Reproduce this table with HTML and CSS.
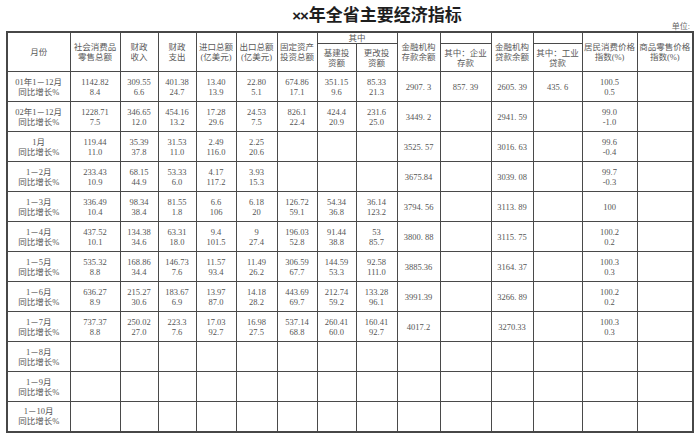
FILE: index.html
```html
<!DOCTYPE html>
<html lang="zh">
<head>
<meta charset="utf-8">
<title>××年全省主要经济指标</title>
<link rel="stylesheet" href="styles.css">
</head>
<body>
<div class="page">
  <h1 class="title"><span class="xx">××</span>年全省主要经济指标</h1>
  <div class="unit">单位:</div>
  <table class="grid">
    <colgroup>
      <col class="c63"><col class="c50"><col class="c38"><col class="c38"><col class="c40"><col class="c41"><col class="c40"><col class="c39"><col class="c41"><col class="c43"><col class="c51"><col class="c42"><col class="c49"><col class="c55"><col class="c56">
    </colgroup>
    <thead>
      <tr class="h1">
        <th rowspan="2">月份</th>
        <th rowspan="2">社会消费品<br>零售总额</th>
        <th rowspan="2">财政<br>收入</th>
        <th rowspan="2">财政<br>支出</th>
        <th rowspan="2">进口总额<br>(亿美元)</th>
        <th rowspan="2">出口总额<br>(亿美元)</th>
        <th rowspan="2">固定资产<br>投资总额</th>
        <th colspan="2">其中</th>
        <th rowspan="2">金融机构<br>存款余额</th>
        <th></th>
        <th rowspan="2">金融机构<br>贷款余额</th>
        <th></th>
        <th rowspan="2">居民消费价格<br>指数(%)</th>
        <th rowspan="2">商品零售价格<br>指数(%)</th>
      </tr>
      <tr class="h2">
        <th>基建投<br>资额</th>
        <th>更改投<br>资额</th>
        <th>其中：企业<br>存款</th>
        <th>其中：工业<br>贷款</th>
      </tr>
    </thead>
    <tbody>
      <tr><td>01年1－12月<br>同比增长%</td><td>1142.82<br>8.4</td><td>309.55<br>6.6</td><td>401.38<br>24.7</td><td>13.40<br>13.9</td><td>22.80<br>5.1</td><td>674.86<br>17.1</td><td>351.15<br>9.6</td><td>85.33<br>21.3</td><td>2907. 3</td><td>857. 39</td><td>2605. 39</td><td>435. 6</td><td>100.5<br>0.5</td><td></td></tr>
      <tr><td>02年1－12月<br>同比增长%</td><td>1228.71<br>7.5</td><td>346.65<br>12.0</td><td>454.16<br>13.2</td><td>17.28<br>29.6</td><td>24.53<br>7.5</td><td>826.1<br>22.4</td><td>424.4<br>20.9</td><td>231.6<br>25.0</td><td>3449. 2</td><td></td><td>2941. 59</td><td></td><td>99.0<br>-1.0</td><td></td></tr>
      <tr><td>1月<br>同比增长%</td><td>119.44<br>11.0</td><td>35.39<br>37.8</td><td>31.53<br>11.0</td><td>2.49<br>116.0</td><td>2.25<br>20.6</td><td></td><td></td><td></td><td>3525. 57</td><td></td><td>3016. 63</td><td></td><td>99.6<br>-0.4</td><td></td></tr>
      <tr><td>1－2月<br>同比增长%</td><td>233.43<br>10.9</td><td>68.15<br>44.9</td><td>53.33<br>6.0</td><td>4.17<br>117.2</td><td>3.93<br>15.3</td><td></td><td></td><td></td><td>3675.84</td><td></td><td>3039. 08</td><td></td><td>99.7<br>-0.3</td><td></td></tr>
      <tr><td>1－3月<br>同比增长%</td><td>336.49<br>10.4</td><td>98.34<br>38.4</td><td>81.55<br>1.8</td><td>6.6<br>106</td><td>6.18<br>20</td><td>126.72<br>59.1</td><td>54.34<br>36.8</td><td>36.14<br>123.2</td><td>3794. 56</td><td></td><td>3113. 89</td><td></td><td>100</td><td></td></tr>
      <tr><td>1－4月<br>同比增长%</td><td>437.52<br>10.1</td><td>134.38<br>34.6</td><td>63.31<br>18.0</td><td>9.4<br>101.5</td><td>9<br>27.4</td><td>196.03<br>52.8</td><td>91.44<br>38.8</td><td>53<br>85.7</td><td>3800. 88</td><td></td><td>3115. 75</td><td></td><td>100.2<br>0.2</td><td></td></tr>
      <tr><td>1－5月<br>同比增长%</td><td>535.32<br>8.8</td><td>168.86<br>34.4</td><td>146.73<br>7.6</td><td>11.57<br>93.4</td><td>11.49<br>26.2</td><td>306.59<br>67.7</td><td>144.59<br>53.3</td><td>92.58<br>111.0</td><td>3885.36</td><td></td><td>3164. 37</td><td></td><td>100.3<br>0.3</td><td></td></tr>
      <tr><td>1－6月<br>同比增长%</td><td>636.27<br>8.9</td><td>215.27<br>30.6</td><td>183.67<br>6.9</td><td>13.97<br>87.0</td><td>14.18<br>28.2</td><td>443.69<br>69.7</td><td>212.74<br>59.2</td><td>133.28<br>96.1</td><td>3991.39</td><td></td><td>3266. 89</td><td></td><td>100.2<br>0.2</td><td></td></tr>
      <tr><td>1－7月<br>同比增长%</td><td>737.37<br>8.8</td><td>250.02<br>27.0</td><td>223.3<br>7.6</td><td>17.03<br>92.7</td><td>16.98<br>27.5</td><td>537.14<br>68.8</td><td>260.41<br>60.0</td><td>160.41<br>92.7</td><td>4017.2</td><td></td><td>3270.33</td><td></td><td>100.3<br>0.3</td><td></td></tr>
      <tr><td>1－8月<br>同比增长%</td><td></td><td></td><td></td><td></td><td></td><td></td><td></td><td></td><td></td><td></td><td></td><td></td><td></td><td></td></tr>
      <tr><td>1－9月<br>同比增长%</td><td></td><td></td><td></td><td></td><td></td><td></td><td></td><td></td><td></td><td></td><td></td><td></td><td></td><td></td></tr>
      <tr><td>1－10月<br>同比增长%</td><td></td><td></td><td></td><td></td><td></td><td></td><td></td><td></td><td></td><td></td><td></td><td></td><td></td><td></td></tr>
    </tbody>
  </table>
</div>
</body>
</html>
```

FILE: styles.css
```css
html, body {
  margin: 0;
  padding: 0;
  background: #ffffff;
}

.page {
  padding: 4px 0 0 6px;
  width: 686px;
}

.title {
  margin: 0;
  height: 19px;
  line-height: 19px;
  text-align: center;
  font-family: "Noto Sans CJK SC", "Noto Sans", sans-serif;
  font-weight: 700;
  font-size: 17px;
  color: #1e1e1e;
  padding-left: 56px;
}

.xx {
  font-family: "Liberation Sans", "Noto Sans", sans-serif;
  font-weight: 700;
  font-size: 15px;
  letter-spacing: -1px;
  margin-right: 1px;
}

.unit {
  height: 8px;
  line-height: 8px;
  text-align: right;
  font-family: "Liberation Serif", "Noto Sans CJK SC", serif;
  font-size: 8px;
  color: #666;
  margin-right: 2px;
}

.grid {
  border-collapse: collapse;
  table-layout: fixed;
  width: 686px;
  border: 2px solid #474747;
  font-family: "Liberation Serif", "Noto Sans CJK SC", serif;
  font-size: 8.5px;
  line-height: 10px;
  color: #555;
}

.c63 { width: 63px; }
.c50 { width: 50px; }
.c38 { width: 38px; }
.c40 { width: 40px; }
.c41 { width: 41px; }
.c39 { width: 39px; }
.c43 { width: 43px; }
.c51 { width: 51px; }
.c42 { width: 42px; }
.c49 { width: 49px; }
.c55 { width: 55px; }
.c56 { width: 56px; }

.grid th,
.grid td {
  border: 1px solid #4a4a4a;
  padding: 0;
  text-align: center;
  vertical-align: middle;
  font-weight: 400;
  overflow: hidden;
  white-space: nowrap;
}

.grid th {
  font-size: 8.5px;
  color: #5a5a5a;
}

.h1 { height: 11px; }
.h2 { height: 28px; }

.grid tbody tr { height: 30px; }
```
